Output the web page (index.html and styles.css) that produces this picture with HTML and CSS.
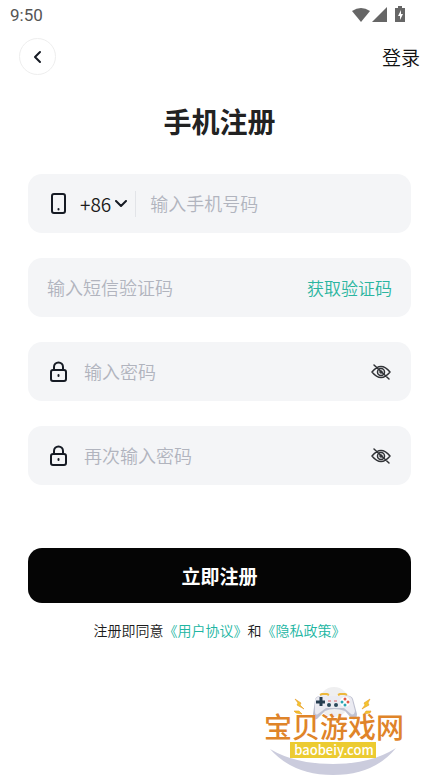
FILE: index.html
```html
<!DOCTYPE html>
<html lang="zh-CN">
<head>
  <meta charset="UTF-8">
  <meta name="viewport" content="width=device-width, initial-scale=1">
  <title>手机注册</title>
  <link rel="stylesheet" href="styles.css">
</head>
<body>
  <div class="status-bar">
    <span class="time">9:50</span>
    <svg class="status-icons" width="56" height="18" viewBox="0 0 56 18">
      <path d="M1 5Q10-1 19 5L10 16Z"/>
      <path d="M36 1V16H21Z"/>
      <path d="M44 2h3V0h4v2h3v14H44Z"/>
      <path class="bolt" d="M50 4l-3 6h2v4l3-6h-2Z"/>
    </svg>
  </div>

  <header class="top-nav">
    <button class="back-btn" type="button" aria-label="返回">
      <svg width="12" height="14" viewBox="0 0 12 14"><path d="M8 2L3 7L8 12"/></svg>
    </button>
    <a class="login-link" href="#">登录</a>
  </header>

  <main>
    <h1>手机注册</h1>

    <form>
      <div class="field">
        <label class="field-icon" for="phone" aria-label="手机号码">
          <svg width="22" height="24" viewBox="0 0 22 24">
            <rect x="5" y="2" width="13" height="19" rx="2"/>
            <path d="M11.500 17v.5"/>
          </svg>
        </label>
        <button class="area-code" type="button">+86
          <svg width="12" height="8" viewBox="0 0 12 8"><path d="M1 1L6 6L11 1"/></svg>
        </button>
        <input id="phone" type="tel" placeholder="输入手机号码">
      </div>

      <div class="field">
        <input id="code" type="text" placeholder="输入短信验证码" aria-label="短信验证码">
        <button class="code-btn" type="button">获取验证码</button>
      </div>

      <div class="field">
        <label class="field-icon" for="password" aria-label="密码">
          <svg width="22" height="24" viewBox="0 0 22 24">
            <rect x="4" y="10" width="15" height="11" rx="2"/>
            <path d="M7 10V7a4.500 4.500 0 0 1 9 0V10M11.500 15v1"/>
          </svg>
        </label>
        <input id="password" class="password" type="password" placeholder="输入密码">
        <button class="eye-btn" type="button" aria-label="显示密码">
          <svg width="22" height="18" viewBox="0 0 22 18">
            <path d="M2 9Q11-2 20 9Q11 20 2 9ZM4 2L19 16"/>
            <circle cx="11" cy="9" r="3.500"/>
            <circle cx="11" cy="9" r="1"/>
          </svg>
        </button>
      </div>

      <div class="field">
        <label class="field-icon" for="password2" aria-label="再次输入密码">
          <svg width="22" height="24" viewBox="0 0 22 24">
            <rect x="4" y="10" width="15" height="11" rx="2"/>
            <path d="M7 10V7a4.500 4.500 0 0 1 9 0V10M11.500 15v1"/>
          </svg>
        </label>
        <input id="password2" class="password" type="password" placeholder="再次输入密码">
        <button class="eye-btn" type="button" aria-label="显示密码">
          <svg width="22" height="18" viewBox="0 0 22 18">
            <path d="M2 9Q11-2 20 9Q11 20 2 9ZM4 2L19 16"/>
            <circle cx="11" cy="9" r="3.500"/>
            <circle cx="11" cy="9" r="1"/>
          </svg>
        </button>
      </div>

      <button class="submit-btn" type="submit">立即注册</button>
    </form>

    <p class="terms">注册即同意<a href="#">《用户协议》</a>和<a href="#">《隐私政策》</a></p>
  </main>

  <footer>
    <svg class="site-logo" width="160" height="98" viewBox="0 0 160 98">
      <circle cx="79" cy="22" r="15" fill="#efeff0"/>
      <!-- lightning marks -->
      <g fill="#f4c62e" stroke="#e69a28" stroke-width=".6">
        <path d="M40 19l6 4-1 2 4 4-7-4 1-2Z"/>
        <path d="M115 19l-6 4 1 2-3 4 7-4-1-2Z"/>
        <path d="M39 31l5 0 3 3-6-1Z"/>
        <path d="M116 31l-5 0-2 3 6-1Z"/>
      </g>
      <!-- gamepad -->
      <path d="M65 15l2-1h5l2 1M83 15l2-1h5l2 1" fill="none" stroke="#edb83b" stroke-width="2"/>
      <path d="M60 20Q61 15 69 16H88Q96 14 98 19L102 34Q102 41 97 39L90 31Q79 27 70 31L62 39Q57 41 58 34Z" fill="#bfc1d1"/>
      <path d="M60 20Q63 15 69 16H88Q95 15 97 19L100 31Q99 36 96 34L89 28H71L63 34Q60 36 60 31Z" fill="#ebebf2"/>
      <path d="M66 17v9M61 22h9" stroke="#263d50" stroke-width="3"/>
      <g fill="#2b485c">
        <circle cx="74" cy="25" r="2"/>
        <circle cx="81" cy="25" r="2"/>
      </g>
      <path d="M73 21h3M79 21h3" stroke="#d7656c" stroke-width="1"/>
      <circle cx="90" cy="22" r="5" fill="#fff"/>
      <g fill="#e35a49">
        <circle cx="90" cy="19" r="1.500"/>
        <circle cx="93" cy="22" r="1.500"/>
      </g>
      <g fill="#2aa4b3">
        <circle cx="90" cy="25" r="1.500"/>
        <circle cx="87" cy="22" r="1.500"/>
      </g>
      <path d="M15 69Q40 84 78 84T141 68Q119 95 78 95Q38 95 15 69Z" fill="#cbccdd"/>
      <text class="logo-name" x="79" y="58">宝贝游戏网</text>
      <rect x="35" y="62" width="86" height="16" fill="#eccb31"/>
      <text class="logo-url" x="79" y="75">baobeiy.com</text>
    </svg>
  </footer>
</body>
</html>
```
FILE: styles.css
```css
* { box-sizing: border-box; }
body {
  margin: 0;
  font-family: "Noto Sans CJK SC", sans-serif;
  background: #fff;
  color: #1c1c1c;
}
button {
  padding: 0; border: none; background: none;
  font-family: inherit; color: inherit; cursor: pointer;
}
a { text-decoration: none; }
svg { display: block; flex-shrink: 0; }

.status-bar {
  display: flex; justify-content: space-between; align-items: center;
  height: 30px; padding: 0 32px 0 10px;
}
.time { font: 400 17px Roboto, sans-serif; color: #555; }
.status-icons { fill: #666; }
.status-icons .bolt { fill: #fff; }

.top-nav {
  display: flex; justify-content: space-between; align-items: center;
  height: 53px; padding: 0 19px;
}
.back-btn {
  display: flex; align-items: center; justify-content: center;
  width: 37px; height: 37px;
  border: 1px solid #eee; border-radius: 50%;
}
.back-btn svg, .field svg {
  fill: none; stroke: #161b24; stroke-width: 2;
  stroke-linecap: round; stroke-linejoin: round;
}
.login-link { font-size: 19px; line-height: 24px; font-weight: 350; color: #111; }

main { padding: 0 28px; }
h1 {
  margin: 17px 0 32px;
  font-size: 28px; line-height: 42px; font-weight: bold;
  text-align: center; color: #222;
}
form { display: flex; flex-direction: column; gap: 25px; }
.field {
  display: flex; align-items: center;
  height: 59px; padding: 0 19px;
  background: #f4f5f7; border-radius: 14px;
}
.field input {
  flex: 1; min-width: 0; height: 28px; padding: 0 0 2px;
  border: none; outline: none; background: none;
  font-family: inherit; font-size: 18px; font-weight: 350; color: #1c1c1c;
}
.field input::placeholder { color: #b1b4be; opacity: 1; }
.field .password { margin-left: 15px; }
.area-code {
  display: flex; align-items: center; gap: 4px;
  height: 26px; margin: 0 14px 0 11px; padding-right: 8px;
  border-right: 1px solid #e2e4e8;
  font-size: 19px; line-height: 24px; font-weight: 350;
}
.code-btn { font-size: 17px; font-weight: 350; color: #2bb5a0; }
.field .eye-btn svg { stroke-width: 1.500; stroke: #303236; }
.submit-btn {
  height: 55px; margin-top: 38px;
  background: #050505; color: #fff; border-radius: 14px;
  font-size: 19px; font-weight: bold;
}
.terms {
  margin: 17px 0 0;
  font-size: 14px; line-height: 20px; font-weight: 350; text-align: center;
}
.terms a { color: #20b5a2; }

footer { display: flex; justify-content: flex-end; padding: 40px 24px 0 0; }
.logo-name {
  font-size: 28px; font-weight: 500; text-anchor: middle;
  fill: #df8429;
}
.logo-url {
  font-size: 13px; font-weight: 500; text-anchor: middle;
  fill: #fff;
}
```
